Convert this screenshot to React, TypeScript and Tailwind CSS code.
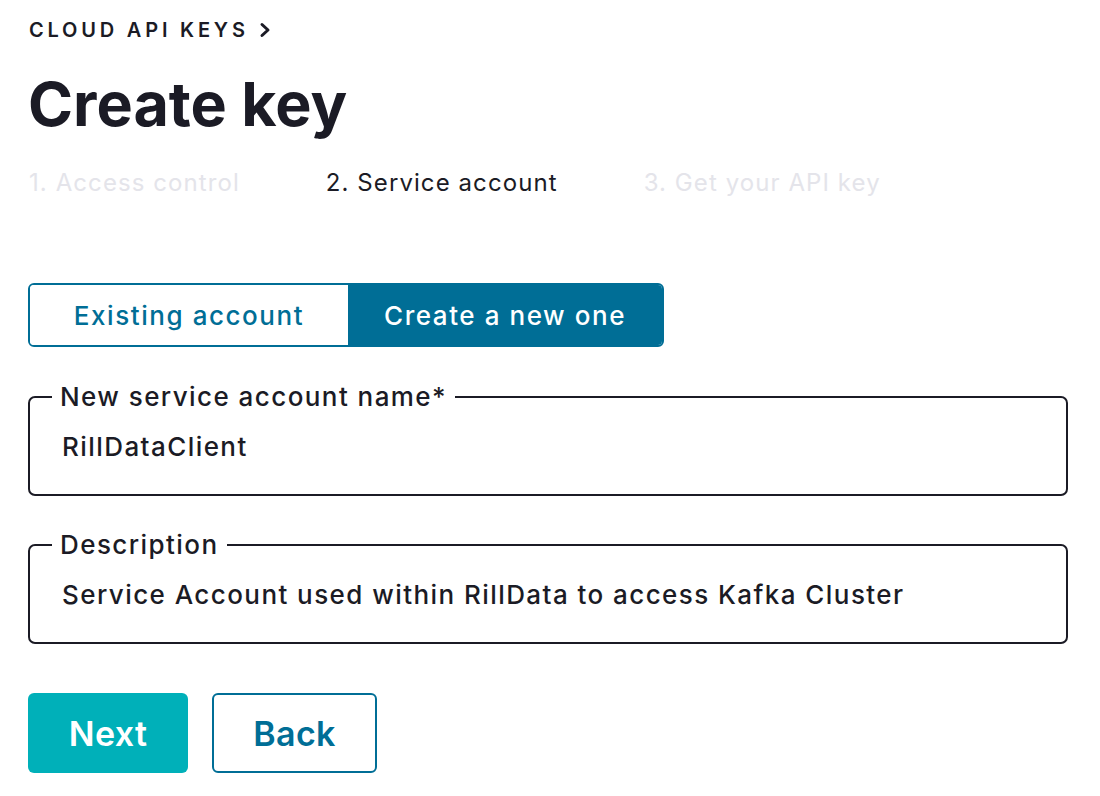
import React, { useState } from 'react';

const font = { fontFamily: 'Inter, "Liberation Sans", sans-serif' };

const steps = ['1. Access control', '2. Service account', '3. Get your API key'];

const Field: React.FC<{ label: string; value: string }> = ({ label, value }) => (
  <fieldset className="rounded-[7px] border-2 border-[#1b1b25] px-[32px] pt-[18px] pb-[31px]">
    <legend className="-ml-[10px] px-[8px] text-[26px] leading-[32px] font-medium tracking-[0.055em] text-[#1b1b25]">
      {label}
    </legend>
    <div className="text-[26px] leading-[32px] font-medium tracking-[0.055em] text-[#1b1b25]">{value}</div>
  </fieldset>
);

export default function App() {
  const [mode, setMode] = useState<'existing' | 'new'>('new');

  return (
    <div className="min-h-[796px] bg-white px-[28px] pt-[18px]" style={font}>
      <div className="flex items-center gap-[9px] pl-[1px] text-[20px] leading-[24px] font-semibold tracking-[0.19em] text-[#1b1b25]">
        <span>CLOUD API KEYS</span>
        <svg width="14" height="16" viewBox="0 0 14 16" fill="none">
          <path d="M4 2.5 L10 8 L4 13.5" stroke="#1b1b25" strokeWidth="3" strokeLinecap="round" strokeLinejoin="round" />
        </svg>
      </div>

      <h1 className="mt-[32px] text-[61px] leading-[60px] font-bold text-[#1b1b25]">
        Create key
      </h1>

      <div className="mt-[33px] flex gap-[86px] pl-[1px] text-[24px] leading-[32px] font-normal tracking-[0.045em]">
        {steps.map((s, i) => (
          <span key={s} className={i === 1 ? 'text-[#1b1b25]' : 'text-[#e4e4ea]'}>
            {s}
          </span>
        ))}
      </div>

      <div className="mt-[84px] flex w-[636px] overflow-hidden rounded-[6px] border-2 border-[#006e96]">
        <button
          onClick={() => setMode('existing')}
          className={`h-[60px] w-[318px] text-[26px] font-medium tracking-[0.06em] ${mode === 'existing' ? 'bg-[#006e96] text-white' : 'bg-white text-[#006e96]'}`}
        >
          Existing account
        </button>
        <button
          onClick={() => setMode('new')}
          className={`h-[60px] flex-1 text-[26px] font-medium tracking-[0.06em] ${mode === 'new' ? 'bg-[#006e96] text-white' : 'bg-white text-[#006e96]'}`}
        >
          Create a new one
        </button>
      </div>

      <div className="mt-[34px] w-[1040px]">
        <Field label="New service account name*" value="RillDataClient" />
      </div>

      <div className="mt-[33px] w-[1040px]">
        <Field label="Description" value="Service Account used within RillData to access Kafka Cluster" />
      </div>

      <div className="mt-[49px] flex gap-[24px]">
        <button className="h-[80px] w-[160px] rounded-[6px] bg-[#00b0b9] text-[34px] font-semibold tracking-[0.01em] text-white">
          Next
        </button>
        <button className="h-[80px] w-[165px] rounded-[6px] border-2 border-[#006e96] bg-white text-[34px] font-semibold tracking-[0.01em] text-[#006e96]">
          Back
        </button>
      </div>
    </div>
  );
}
